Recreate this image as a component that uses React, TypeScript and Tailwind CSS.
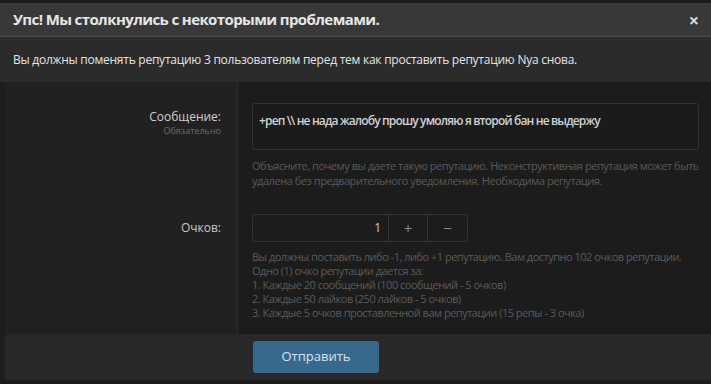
import React from "react";

const HELP_LINES = [
  "Вы должны поставить либо -1, либо +1 репутацию. Вам доступно 102 очков репутации.",
  "Одно (1) очко репутации дается за:",
  "1. Каждые 20 сообщений (100 сообщений - 5 очков)",
  "2. Каждые 50 лайков (250 лайков - 5 очков)",
  "3. Каждые 5 очков проставленной вам репутации (15 репы - 3 очка)",
];

export default function App() {
  return (
    <div className="flex h-[384px] w-[711px] flex-col overflow-hidden bg-[#1d1d1d] font-['Open_Sans',sans-serif]">
      <div className="h-[3px] shrink-0 bg-[#1c1c1c]" />

      {/* error overlay */}
      <div className="shrink-0">
        <div className="flex h-[34px] items-center justify-between border-b border-[#484848] bg-[#383838] pl-[13px] pr-[12px]">
          <h1 className="text-[15px] font-bold tracking-[-0.6px] text-[#e6e6e6]">
            Упс! Мы столкнулись с некоторыми проблемами.
          </h1>
          <span className="text-[18px] font-bold leading-none text-[#d8d8d8]">×</span>
        </div>
        <div className="flex h-[45px] items-center bg-[#2b2b2b] pl-[13px] text-[12px] tracking-[-0.25px] text-[#e4e4e4]">
          Вы должны поменять репутацию 3 пользователям перед тем как проставить репутацию Nya снова.
        </div>
      </div>

      {/* form */}
      <div className="flex flex-1 pl-[5px]">
        <div className="flex flex-1 flex-col">
          <div className="flex flex-1">
            <div className="w-[233px] shrink-0 border-r border-[#2c2c2c] bg-[#212121] pr-[16px] text-right">
              <div className="mt-[27px] text-[12px] leading-[15px] text-[#cfcfcf]">Сообщение:</div>
              <div className="mt-[1px] text-[9px] leading-[11px] text-[#6a6a6a]">Обязательно</div>
              <div className="mt-[83px] text-[12px] text-[#c8c8c8]">Очков:</div>
            </div>
            <div className="flex-1 bg-[#1c1c1c] pl-[14px] pr-[12px] pt-[21px]">
              <div className="h-[47px] rounded-[3px] border border-[#333333] bg-[#1b1b1b] px-[6px] pt-[8px] text-[12px] font-semibold tracking-[-0.85px] text-[#d0d0d0]">
                +реп \\ не нада жалобу прошу умоляю я второй бан не выдержу
              </div>
              <div className="mt-[8px] text-[11px] leading-[15px] tracking-[-0.45px] text-[#595959]">
                Объясните, почему вы даете такую репутацию. Неконструктивная репутация может быть удалена без предварительного уведомления. Необходима репутация.
              </div>
              <div className="mt-[26px] flex h-[28px] w-[216px] rounded-[4px] border border-[#333333] text-[#8a8a8a]">
                <div className="flex w-[135px] items-center justify-end pr-[7px] text-[12px] text-[#cfcfcf]">1</div>
                <div className="flex w-[39px] items-center justify-center border-l border-[#333333] text-[15px]">+</div>
                <div className="flex flex-1 items-center justify-center border-l border-[#333333] text-[15px]">−</div>
              </div>
              <div className="mt-[8px] text-[11px] leading-[14px] tracking-[-0.5px] text-[#5a5a5a]">
                {HELP_LINES.map((l) => (
                  <div key={l}>{l}</div>
                ))}
              </div>
            </div>
          </div>
          <div className="flex h-[46px] shrink-0 items-center rounded-tl-[3px] bg-[#282828] pl-[248px]">
            <button className="h-[32px] w-[126px] rounded-[3px] bg-[#37698c] text-[13px] text-[#d3e3ee]">
              Отправить
            </button>
          </div>
        </div>
      </div>
      <div className="h-[4px] shrink-0 bg-[#1c1c1c]" />
    </div>
  );
}
